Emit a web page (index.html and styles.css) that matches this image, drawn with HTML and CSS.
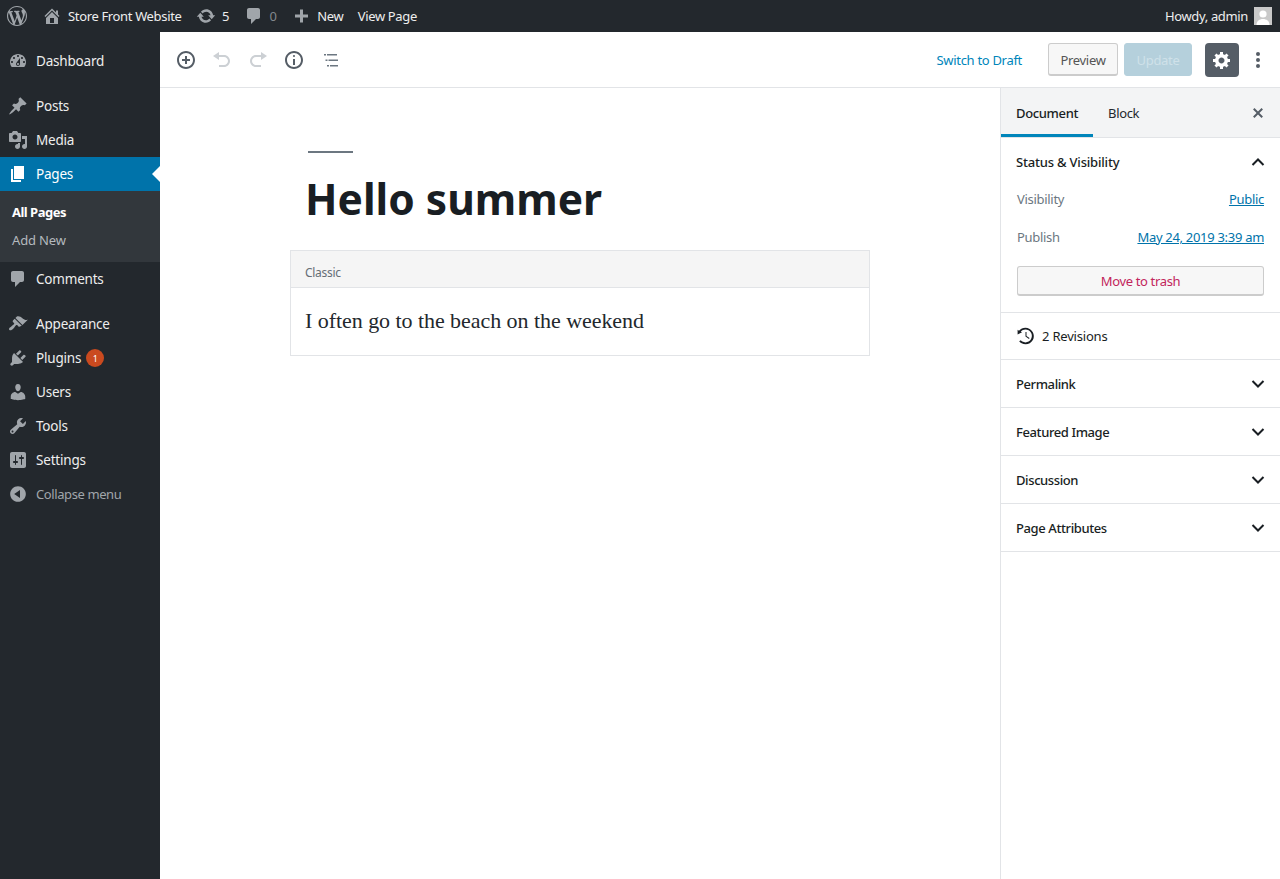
FILE: index.html
```html
<!doctype html>
<html>
  <head>
    <meta charset="utf-8">
    <title>Edit Page</title>
    <link rel="stylesheet" href="styles.css">
  </head>
  <body>
    <header class="adminbar">
      <div class="bar-left">
        <svg class="wp-logo" viewBox="0 0 20 20"><path d="M20 10c0-5.510-4.490-10-10-10C4.480 0 0 4.490 0 10c0 5.520 4.480 10 10 10 5.510 0 10-4.480 10-10zM7.780 15.370L4.370 6.220c.55-.02 1.170-.08 1.170-.08.5-.06.44-1.130-.06-1.110 0 0-1.450.11-2.370.11-.18 0-.37 0-.58-.01C4.120 2.690 6.870 1.110 10 1.110c2.330 0 4.450.87 6.050 2.340-.68-.11-1.650.39-1.650 1.580 0 .74.45 1.360.9 2.100.35.61.55 1.360.55 2.460 0 1.490-1.400 5-1.400 5l-3.030-8.370c.54-.02.82-.17.82-.17.5-.05.44-1.250-.06-1.220 0 0-1.440.12-2.380.12-.87 0-2.330-.12-2.330-.12-.5-.03-.56 1.200-.06 1.220l.92.08 1.260 3.410zM17.410 10c.24-.64.74-1.870.43-4.250.7 1.290 1.050 2.710 1.050 4.250 0 3.290-1.730 6.240-4.400 7.780.97-2.590 1.940-5.200 2.920-7.780zM6.100 18.090C3.120 16.650 1.110 13.530 1.110 10c0-1.300.23-2.480.72-3.590C3.250 10.300 4.670 14.200 6.100 18.090zm4.030-6.630l2.580 6.980c-.86.29-1.760.45-2.710.45-.79 0-1.570-.11-2.290-.33.81-2.380 1.620-4.740 2.420-7.100z"/></svg>
        <a class="bar-item"><svg class="bar-icon" viewBox="0 0 20 20"><path d="M16 8.500l1.530 1.530-1.060 1.060L10 4.620l-6.470 6.470-1.060-1.060L10 2.500l4 4v-2h2v4zm-6-2.460l6 5.990V18H4v-5.970zM12 17v-5H8v5h4z"/></svg>Store Front Website</a>
        <a class="bar-item"><svg class="bar-icon" viewBox="0 0 20 20"><path d="M10.200 3.280c3.530 0 6.430 2.610 6.920 6h2.080l-3.500 4-3.500-4h2.320c-.45-1.970-2.210-3.450-4.320-3.450-1.450 0-2.730.71-3.540 1.780L4.950 5.660C6.230 4.200 8.110 3.280 10.200 3.280zm-.4 13.440c-3.520 0-6.430-2.610-6.920-6H.8l3.500-4c1.170 1.330 2.330 2.670 3.500 4H5.480c.45 1.970 2.210 3.450 4.320 3.450 1.450 0 2.730-.71 3.540-1.780l1.710 1.950c-1.280 1.460-3.150 2.380-5.250 2.380z"/></svg>5</a>
        <a class="bar-item muted"><svg class="bar-icon" viewBox="0 0 20 20"><path d="M5 2h9c1.100 0 2 .9 2 2v7c0 1.100-.9 2-2 2h-2l-5 5v-5H5c-1.100 0-2-.9-2-2V4c0-1.100.9-2 2-2z"/></svg>0</a>
        <a class="bar-item"><svg class="bar-icon" viewBox="0 0 20 20"><path d="M17 7v3h-5v5H9v-5H4V7h5V2h3v5h5z" transform="translate(0 1.500)"/></svg>New</a>
        <a class="bar-item">View Page</a>
      </div>
      <div class="bar-right">
        <span>Howdy, admin</span>
        <svg class="avatar" viewBox="0 0 18 18"><rect width="18" height="18" fill="#c9c9c9"/><circle cx="9" cy="7" r="3.600" fill="#fff"/><path d="M2.500 18c0-4 3-6 6.500-6s6.500 2 6.500 6z" fill="#fff"/></svg>
      </div>
    </header>

    <div class="layout">
      <nav class="sidemenu">
        <a class="menu-item"><svg viewBox="0 0 20 20"><path d="M3.760 16h12.480c1.100-1.370 1.760-3.110 1.760-5 0-4.420-3.580-8-8-8s-8 3.580-8 8c0 1.890.66 3.630 1.760 5zM10 4c.55 0 1 .45 1 1s-.45 1-1 1-1-.45-1-1 .45-1 1-1zM6 6c.55 0 1 .45 1 1s-.45 1-1 1-1-.45-1-1 .45-1 1-1zm8 0c.55 0 1 .45 1 1s-.45 1-1 1-1-.45-1-1 .45-1 1-1zm-5.370 5.550L12 7v6c0 1.100-.9 2-2 2s-2-.9-2-2c0-.57.24-1.080.63-1.450zM4 10c.55 0 1 .45 1 1s-.45 1-1 1-1-.45-1-1 .45-1 1-1zm12 0c.55 0 1 .45 1 1s-.45 1-1 1-1-.45-1-1 .45-1 1-1zm-5 3c0-.55-.45-1-1-1s-1 .45-1 1 .45 1 1 1 1-.45 1-1z"/></svg>Dashboard</a>
        <div class="menu-sep"></div>
        <a class="menu-item"><svg viewBox="0 0 20 20"><path d="M10.440 3.020l1.820-1.820 6.360 6.350-1.830 1.820c-1.050-.68-2.480-.57-3.410.36l-.75.75c-.92.93-1.040 2.350-.35 3.410l-1.830 1.820-2.410-2.410-2.800 2.790c-.42.42-3.380 2.710-3.800 2.290s1.860-3.390 2.280-3.810l2.790-2.790L4.100 9.360l1.830-1.820c1.050.69 2.480.57 3.400-.36l.75-.75c.93-.92 1.050-2.350.36-3.410z"/></svg>Posts</a>
        <a class="menu-item"><svg viewBox="0 0 20 20"><path d="M13 11V4c0-.55-.45-1-1-1h-1.670L9 1H5L3.670 3H2c-.55 0-1 .45-1 1v7c0 .55.45 1 1 1h10c.55 0 1-.45 1-1zM7 4.500c1.380 0 2.500 1.120 2.500 2.500S8.380 9.500 7 9.500 4.500 8.380 4.500 7 5.620 4.500 7 4.500zM14 6h5v10.500c0 1.380-1.120 2.500-2.500 2.500S14 17.880 14 16.500s1.120-2.500 2.500-2.500c.17 0 .34.02.5.05V9h-3V6zm-4 8.050V13h2v3.500c0 1.380-1.120 2.500-2.500 2.500S7 17.880 7 16.500 8.120 14 9.500 14c.17 0 .34.02.5.05z"/></svg>Media</a>
        <a class="menu-item current"><svg viewBox="0 0 20 20"><path d="M6 15V2h10v13H6zm-1 1h8v2H3V5h2v11z"/></svg>Pages</a>
        <div class="submenu">
          <a class="sub-item active">All Pages</a>
          <a class="sub-item">Add New</a>
        </div>
        <a class="menu-item"><svg viewBox="0 0 20 20"><path d="M5 2h9c1.100 0 2 .9 2 2v7c0 1.100-.9 2-2 2h-2l-5 5v-5H5c-1.100 0-2-.9-2-2V4c0-1.100.9-2 2-2z"/></svg>Comments</a>
        <div class="menu-sep"></div>
        <a class="menu-item"><svg viewBox="0 0 20 20"><path d="M14.480 11.060L7.410 3.990l1.500-1.500c.5-.56 2.300-.47 3.510.32 1.210.8 1.430 1.280 2.910 2.100 1.180.64 2.450 1.260 4.450.85zm-.71.71L6.700 4.700 4.930 6.470c-.39.39-.39 1.020 0 1.410l1.060 1.060c.39.39.39 1.030 0 1.420-.6.6-1.430 1.110-2.210 1.690-.35.26-.7.53-1.010.84C1.430 13.230.4 14.940 1.400 15.940c.99.99 2.710-.03 4.050-1.370.3-.3.58-.66.84-1.010.58-.78 1.090-1.610 1.690-2.210.39-.39 1.020-.39 1.410 0l1.060 1.060c.39.39 1.020.39 1.410 0z"/></svg>Appearance</a>
        <a class="menu-item"><svg viewBox="0 0 20 20"><path d="M13.110 4.360L9.870 7.600 8 5.730l3.240-3.240c.35-.34 1.050-.2 1.560.32.52.51.66 1.210.31 1.550zm-8 1.770l.91-1.120 9.010 9.010-1.190.84c-.71.71-2.630 1.160-3.820 1.160H6.140L4.900 17.260c-.59.59-1.540.59-2.120 0-.59-.58-.59-1.530 0-2.120l1.240-1.240v-3.880c0-1.130.4-3.190 1.090-3.890zm7.260 3.970l3.240-3.240c.34-.35 1.040-.21 1.550.31.52.51.66 1.210.31 1.550l-3.240 3.250z"/></svg>Plugins<span class="badge">1</span></a>
        <a class="menu-item"><svg viewBox="0 0 20 20"><path d="M10 9.250c-2.270 0-2.730-3.440-2.730-3.440C7 4.020 7.820 2 9.970 2c2.160 0 2.980 2.020 2.710 3.810 0 0-.41 3.440-2.680 3.440zm0 2.570L12.720 10c2.390 0 4.520 2.330 4.520 4.530v2.490s-3.650 1.130-7.240 1.130c-3.650 0-7.240-1.130-7.240-1.130v-2.490c0-2.250 1.940-4.480 4.470-4.480z"/></svg>Users</a>
        <a class="menu-item"><svg viewBox="0 0 20 20"><path d="M16.680 9.770c-1.340 1.340-3.300 1.670-4.950.99l-5.410 6.520c-.99.99-2.590.99-3.580 0s-.99-2.590 0-3.570l6.520-5.420c-.68-1.650-.35-3.610.99-4.950 1.280-1.280 3.120-1.620 4.720-1.060l-2.890 2.890 2.820 2.820 2.860-2.870c.53 1.580.18 3.390-1.080 4.650zM3.810 16.210c.4.39 1.040.39 1.430 0 .4-.4.4-1.040 0-1.430-.39-.4-1.030-.4-1.430 0-.39.39-.39 1.030 0 1.430z"/></svg>Tools</a>
        <a class="menu-item"><svg viewBox="0 0 20 20"><path d="M18 16V4c0-1.100-.9-2-2-2H4c-1.100 0-2 .9-2 2v12c0 1.100.9 2 2 2h12c1.100 0 2-.9 2-2zM8 11h1c.55 0 1 .45 1 1s-.45 1-1 1H8v1.500c0 .28-.22.5-.5.5s-.5-.22-.5-.5V13H6c-.55 0-1-.45-1-1s.45-1 1-1h1V5.500c0-.28.22-.5.5-.5s.5.22.5.5V11zm5-2h-1c-.55 0-1-.45-1-1s.45-1 1-1h1V5.500c0-.28.22-.5.5-.5s.5.22.5.5V7h1c.55 0 1 .45 1 1s-.45 1-1 1h-1v5.500c0 .28-.22.5-.5.5s-.5-.22-.5-.5V9z"/></svg>Settings</a>
        <a class="menu-item collapse"><svg viewBox="0 0 20 20"><path d="M10 2.160c4.330 0 7.840 3.510 7.840 7.840s-3.510 7.840-7.840 7.840S2.160 14.330 2.160 10 5.710 2.160 10 2.160zm2 11.720V6.120L6.180 9.970z"/></svg>Collapse menu</a>
      </nav>

      <div class="editor">
        <div class="toolbar">
          <div class="tools">
            <svg class="tool" viewBox="0 0 20 20"><path d="M10 1c-5 0-9 4-9 9s4 9 9 9 9-4 9-9-4-9-9-9zm0 16c-3.900 0-7-3.100-7-7s3.100-7 7-7 7 3.100 7 7-3.100 7-7 7zm1-11H9v3H6v2h3v3h2v-3h3V9h-3V6z"/></svg>
            <svg class="tool off" viewBox="0 0 20 20"><path d="M12 5H7V2L1 6l6 4V7h5c2.200 0 4 1.800 4 4s-1.800 4-4 4H7v2h5c3.300 0 6-2.700 6-6s-2.700-6-6-6z"/></svg>
            <svg class="tool off" viewBox="0 0 20 20"><path d="M8 5h5V2l6 4-6 4V7H8c-2.200 0-4 1.800-4 4s1.800 4 4 4h5v2H8c-3.300 0-6-2.700-6-6s2.700-6 6-6z"/></svg>
            <svg class="tool" viewBox="0 0 20 20"><path d="M9 15h2V9H9v6zm1-10c-.5 0-1 .5-1 1s.5 1 1 1 1-.5 1-1-.5-1-1-1zm0-4c-5 0-9 4-9 9s4 9 9 9 9-4 9-9-4-9-9-9zm0 16c-3.900 0-7-3.100-7-7s3.100-7 7-7 7 3.100 7 7-3.100 7-7 7z"/></svg>
            <svg class="tool toc" viewBox="0 0 20 20"><path d="M4 4h2v1.500H4V4zm3 0h10v1.500H7V4zM5.500 9.500h2V11h-2V9.500zm3 0H18V11H8.500V9.500zM7 15h2v1.500H7V15zm3 0h8v1.500h-8V15z"/></svg>
          </div>
          <div class="actions">
            <a class="draft">Switch to Draft</a>
            <button class="btn preview">Preview</button>
            <button class="btn update">Update</button>
            <span class="gear"><svg viewBox="0 0 20 20"><path d="M18 12h-2.180c-.17.7-.44 1.350-.81 1.930l1.540 1.540-2.100 2.100-1.540-1.540c-.58.36-1.230.63-1.910.79V19H8v-2.180c-.68-.16-1.330-.43-1.910-.79l-1.540 1.540-2.120-2.120 1.540-1.540c-.36-.58-.63-1.230-.79-1.910H1V9.030h2.170c.16-.7.44-1.350.8-1.940L2.430 5.550l2.100-2.100 1.540 1.540c.58-.37 1.240-.64 1.930-.81V2h3v2.180c.68.16 1.330.43 1.910.79l1.540-1.540 2.120 2.120-1.540 1.540c.36.59.64 1.240.8 1.940H18V12zm-8.500 1.500c1.660 0 3-1.340 3-3s-1.340-3-3-3-3 1.340-3 3 1.340 3 3 3z"/></svg></span>
            <svg class="more" viewBox="0 0 6 18"><circle cx="3" cy="3" r="2"/><circle cx="3" cy="9" r="2"/><circle cx="3" cy="15" r="2"/></svg>
          </div>
        </div>

        <div class="workspace">
          <main class="content">
            <div class="post-head">
              <div class="rule"></div>
              <h1>Hello summer</h1>
            </div>
            <section class="classic">
              <div class="classic-label">Classic</div>
              <p>I often go to the beach on the weekend</p>
            </section>
          </main>

          <aside class="sidebar">
            <div class="tabs">
              <span class="tab active">Document</span>
              <span class="tab">Block</span>
              <svg class="close" viewBox="0 0 20 20"><path d="M14.950 6.460L11.410 10l3.540 3.540-1.410 1.410L10 11.420l-3.530 3.530-1.420-1.420L8.580 10 5.050 6.470l1.420-1.420L10 8.580l3.540-3.530z"/></svg>
            </div>
            <section class="panel open">
              <div class="panel-title">Status &amp; Visibility<svg class="chev" viewBox="0 0 14 8"><path d="M1.500 7L7 1.500 12.500 7"/></svg></div>
              <div class="row"><span>Visibility</span><a>Public</a></div>
              <div class="row"><span>Publish</span><a>May 24, 2019 3:39 am</a></div>
              <button class="trash">Move to trash</button>
            </section>
            <section class="panel revisions">
              <svg viewBox="0 0 20 20"><path d="M13.650 2.880c3.930 2.220 5.350 7.240 3.180 11.200-2.210 3.980-7.230 5.400-11.200 3.190-.98-.55-1.810-1.270-2.450-2.100l1.660-.84c.4.5.9.93 1.480 1.270 3.110 1.730 7.020.62 8.750-2.490 1.730-3.110.62-7.030-2.490-8.750-2.650-1.500-5.900-.9-7.850 1.260l1.300.75L1.600 8.470V3.860l1.400.8c2.500-2.980 6.940-3.900 10.650-1.780zM9.500 6h1v4l3 2-.5 1-3.500-2.500z"/></svg>
              <span>2 Revisions</span>
            </section>
            <section class="panel"><div class="panel-title">Permalink<svg class="chev" viewBox="0 0 14 8"><path d="M1.500 1L7 6.500 12.500 1"/></svg></div></section>
            <section class="panel"><div class="panel-title">Featured Image<svg class="chev" viewBox="0 0 14 8"><path d="M1.500 1L7 6.500 12.500 1"/></svg></div></section>
            <section class="panel"><div class="panel-title">Discussion<svg class="chev" viewBox="0 0 14 8"><path d="M1.500 1L7 6.500 12.500 1"/></svg></div></section>
            <section class="panel"><div class="panel-title">Page Attributes<svg class="chev" viewBox="0 0 14 8"><path d="M1.500 1L7 6.500 12.500 1"/></svg></div></section>
          </aside>
        </div>
      </div>
    </div>
  </body>
</html>
```

FILE: styles.css
```css
* {
  box-sizing: border-box;
}
html, body {
  height: 100%;
}
body {
  margin: 0;
  font-family: "Noto Sans", sans-serif;
  font-size: 13px;
  letter-spacing: -0.3px;
  color: #191e23;
  background: #fff;
  overflow: hidden;
}
button {
  font-family: inherit;
  letter-spacing: inherit;
}

/* top bar */
.adminbar {
  height: 32px;
  background: #23282d;
  color: #eee;
  display: flex;
  justify-content: space-between;
  align-items: center;
  padding-left: 7px;
  padding-right: 8px;
  letter-spacing: -0.35px;
}
.bar-left, .bar-right, .bar-item {
  display: flex;
  align-items: center;
}
.wp-logo {
  width: 20px;
  height: 20px;
  fill: #a0a5aa;
  margin-right: 15px;
}
.bar-item {
  margin-right: 14.500px;
}
.bar-icon {
  width: 20px;
  height: 20px;
  fill: #a0a5aa;
  margin-right: 6px;
}
.bar-item.muted {
  color: #82878c;
}
.bar-right {
  gap: 6px;
}
.avatar {
  width: 18px;
  height: 18px;
}

.layout {
  display: flex;
  height: 847px;
}

/* left menu */
.sidemenu {
  width: 160px;
  flex: none;
  background: #23282d;
  padding-top: 12px;
}
.menu-item {
  height: 34px;
  display: flex;
  align-items: center;
  position: relative;
  color: #eee;
  font-size: 13.500px;
  letter-spacing: -0.2px;
  padding-left: 8px;
  padding-bottom: 1px;
}
.menu-item svg {
  width: 20px;
  height: 20px;
  fill: #a0a5aa;
  margin-right: 8px;
  margin-top: 1px;
}
.menu-sep {
  height: 11px;
}
.menu-item.current {
  background: #0073aa;
  color: #fff;
}
.menu-item.current svg {
  fill: #fff;
}
.menu-item.current::after {
  content: "";
  position: absolute;
  right: 0;
  top: 9px;
  border: 8px solid transparent;
  border-left: 0;
  border-right-color: #fff;
}
.submenu {
  height: 71px;
  background: #32373c;
  padding-top: 7px;
}
.sub-item {
  display: flex;
  align-items: center;
  height: 28px;
  padding-left: 12px;
  color: #b4b9be;
  letter-spacing: -0.15px;
}
.sub-item.active {
  color: #fff;
  font-weight: 700;
  letter-spacing: -0.5px;
}
.badge {
  width: 18px;
  height: 18px;
  border-radius: 50%;
  background: #ca4a1f;
  color: #fff;
  font-size: 9px;
  display: flex;
  align-items: center;
  justify-content: center;
  margin-left: 5px;
  margin-top: 1px;
}
.menu-item.collapse {
  color: #a0a5aa;
  font-size: 13px;
  letter-spacing: -0.4px;
}

/* editor */
.editor {
  flex: 1;
  display: flex;
  flex-direction: column;
  min-width: 0;
}
.toolbar {
  height: 56px;
  flex: none;
  border-bottom: 1px solid #e2e4e7;
  display: flex;
  justify-content: space-between;
  align-items: center;
  padding-left: 16px;
  padding-right: 19px;
}
.tools {
  display: flex;
  gap: 16px;
}
.tool {
  width: 20px;
  height: 20px;
  fill: #555d66;
}
.tool.off {
  fill: #ccd0d4;
}
.tool.toc {
  fill: #6c7781;
}
.actions {
  display: flex;
  align-items: center;
}
.draft {
  color: #0085ba;
  margin-right: 26px;
}
.btn {
  height: 33px;
  font-size: 13px;
  border-radius: 3px;
  padding: 0;
}
.preview {
  width: 70px;
  background: #f7f7f7;
  border: 1px solid #ccc;
  border-bottom-width: 2px;
  color: #555;
  margin-right: 6px;
  padding-top: 1px;
}
.update {
  width: 68px;
  background: #b5d0dc;
  border: 1px solid #b5d0dc;
  color: #cfe1e9;
  margin-right: 13px;
}
.gear {
  width: 34px;
  height: 34px;
  border-radius: 4px;
  background: #555d66;
  display: flex;
  align-items: center;
  justify-content: center;
  margin-right: 16px;
}
.gear svg {
  width: 20px;
  height: 20px;
  fill: #fff;
}
.more {
  width: 6px;
  height: 18px;
  fill: #555d66;
}

.workspace {
  flex: 1;
  display: flex;
  min-height: 0;
}
.content {
  flex: 1;
  padding-top: 63px;
}
.post-head {
  width: 580px;
  margin: 0 auto;
  padding-left: 15px;
}
.rule {
  width: 45px;
  height: 2px;
  background: #6c7781;
  margin-left: 3px;
}
h1 {
  margin: 18px 0 0;
  font-size: 42.500px;
  line-height: 56px;
  font-weight: 700;
  letter-spacing: 0;
  color: #191e23;
}
.classic {
  width: 580px;
  margin: 23px auto 0;
  border: 1px solid #e2e4e7;
}
.classic-label {
  height: 37px;
  background: #f5f5f5;
  border-bottom: 1px solid #e2e4e7;
  color: #666e76;
  padding-left: 14px;
  line-height: 44px;
  font-size: 12px;
}
.classic p {
  margin: 0;
  padding: 18px 14px 20px;
  font-family: "Liberation Serif", serif;
  font-size: 22px;
  line-height: 29px;
  letter-spacing: -0.05px;
  color: #23282d;
}

/* document sidebar */
.sidebar {
  width: 280px;
  flex: none;
  border-left: 1px solid #e2e4e7;
}
.tabs {
  height: 50px;
  background: #f3f4f5;
  border-bottom: 1px solid #e2e4e7;
  display: flex;
  align-items: stretch;
  position: relative;
  letter-spacing: -0.35px;
}
.tab {
  display: flex;
  align-items: center;
  padding: 0 15px;
  height: 49px;
}
.tab.active {
  font-weight: 500;
  border-bottom: 3px solid #0085ba;
  padding-top: 3px;
}
.tab:not(.active) {
  color: #23282d;
}
.close {
  position: absolute;
  right: 12px;
  top: 15px;
  width: 20px;
  height: 20px;
  fill: #555d66;
}
.panel {
  border-bottom: 1px solid #e2e4e7;
  padding: 0 15px;
}
.panel-title {
  height: 47px;
  display: flex;
  align-items: center;
  justify-content: space-between;
  font-weight: 500;
  letter-spacing: -0.4px;
}
.chev {
  width: 14px;
  height: 8px;
  fill: none;
  stroke: #191e23;
  stroke-width: 2;
}
.row {
  display: flex;
  justify-content: space-between;
  align-items: center;
  height: 38px;
  color: #6c7781;
  padding-left: 1px;
  padding-right: 1px;
}
.row a {
  color: #0073aa;
  text-decoration: underline;
}
.panel.open {
  height: 175px;
}
.panel.open .panel-title {
  height: 48px;
  letter-spacing: -0.2px;
}
.panel-title + .row {
  margin-top: -6px;
}
.trash {
  display: block;
  width: 247px;
  height: 30px;
  margin: 10px 0 0 1px;
  background: #f7f7f7;
  border: 1px solid #ccc;
  border-bottom-width: 2px;
  border-radius: 3px;
  color: #c2255c;
  font-size: 13px;
  letter-spacing: -0.35px;
}
.revisions {
  height: 47px;
  display: flex;
  align-items: center;
  gap: 6px;
  letter-spacing: -0.2px;
}
.revisions svg {
  width: 20px;
  height: 20px;
  fill: #191e23;
}
.panel:not(.open):not(.revisions) {
  height: 48px;
}
```
